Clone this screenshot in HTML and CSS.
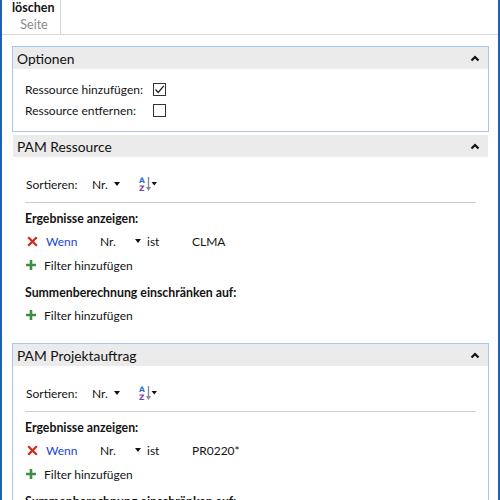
FILE: index.html
```html
<!DOCTYPE html>
<html lang="de">
<head>
<meta charset="utf-8">
<link rel="stylesheet" href="styles.css">
</head>
<body>
<div class="window">
  <div class="ribbon">
    <div class="tabgroup">
      <div class="tab-title">löschen</div>
      <div class="tab-sub">Seite</div>
    </div>
  </div>
  <div class="content">
    <section class="panel focused">
      <div class="panel-head"><span>Optionen</span><svg class="chev" width="10" height="7" viewBox="0 0 10 7"><polyline points="1.5,5.5 5,2 8.5,5.5" fill="none" stroke="#111" stroke-width="2.2"/></svg></div>
      <div class="panel-body options">
        <div class="opt-row"><span class="opt-label">Ressource hinzufügen:</span><span class="check"><svg width="11" height="11" viewBox="0 0 11 11"><polyline points="1.5,5.5 4.2,8.5 9.8,1.8" fill="none" stroke="#222" stroke-width="1.3"/></svg></span></div>
        <div class="opt-row"><span class="opt-label">Ressource entfernen:</span><span class="check"></span></div>
      </div>
    </section>

    <section class="panel">
      <div class="panel-head"><span>PAM Ressource</span><svg class="chev" width="10" height="7" viewBox="0 0 10 7"><polyline points="1.5,5.5 5,2 8.5,5.5" fill="none" stroke="#111" stroke-width="2.2"/></svg></div>
      <div class="panel-body">
        <div class="sort-row">
          <span class="sort-label">Sortieren:</span>
          <span class="sort-field">Nr.</span>
          <span class="tri"></span>
          <svg class="az" width="20" height="16" viewBox="0 0 20 16">
            <text x="1" y="7" class="az-a">A</text>
            <text x="1" y="15" class="az-z">Z</text>
            <line x1="10.5" y1="1" x2="10.5" y2="12" stroke="#8a8a8a" stroke-width="1.4"/>
            <polygon points="8,11 13,11 10.5,15" fill="#8a8a8a"/>
            <polygon points="13.5,6 19,6 16.25,9.5" fill="#111"/>
          </svg>
        </div>
        <div class="sep"></div>
        <div class="sub-title">Ergebnisse anzeigen:</div>
        <div class="cond-row">
          <svg class="xicon" width="11" height="11" viewBox="0 0 11 11"><path d="M1.2 1.2 L9.8 9.8 M9.8 1.2 L1.2 9.8" stroke="#d42a1a" stroke-width="2.3" fill="none"/></svg>
          <span class="wenn">Wenn</span>
          <span class="cond-field">Nr.</span>
          <span class="tri"></span>
          <span class="cond-op">ist</span>
          <span class="cond-val">CLMA</span>
        </div>
        <div class="add-row"><svg class="plus" width="10" height="10" viewBox="0 0 10 10"><path d="M5 0 V10 M0 5 H10" stroke="#3d8f46" stroke-width="2.6"/></svg><span>Filter hinzufügen</span></div>
        <div class="sub-title">Summenberechnung einschränken auf:</div>
        <div class="add-row"><svg class="plus" width="10" height="10" viewBox="0 0 10 10"><path d="M5 0 V10 M0 5 H10" stroke="#3d8f46" stroke-width="2.6"/></svg><span>Filter hinzufügen</span></div>
      </div>
    </section>

    <section class="panel focused">
      <div class="panel-head"><span>PAM Projektauftrag</span><svg class="chev" width="10" height="7" viewBox="0 0 10 7"><polyline points="1.5,5.5 5,2 8.5,5.5" fill="none" stroke="#111" stroke-width="2.2"/></svg></div>
      <div class="panel-body">
        <div class="sort-row">
          <span class="sort-label">Sortieren:</span>
          <span class="sort-field">Nr.</span>
          <span class="tri"></span>
          <svg class="az" width="20" height="16" viewBox="0 0 20 16">
            <text x="1" y="7" class="az-a">A</text>
            <text x="1" y="15" class="az-z">Z</text>
            <line x1="10.5" y1="1" x2="10.5" y2="12" stroke="#8a8a8a" stroke-width="1.4"/>
            <polygon points="8,11 13,11 10.5,15" fill="#8a8a8a"/>
            <polygon points="13.5,6 19,6 16.25,9.5" fill="#111"/>
          </svg>
        </div>
        <div class="sep"></div>
        <div class="sub-title">Ergebnisse anzeigen:</div>
        <div class="cond-row">
          <svg class="xicon" width="11" height="11" viewBox="0 0 11 11"><path d="M1.2 1.2 L9.8 9.8 M9.8 1.2 L1.2 9.8" stroke="#d42a1a" stroke-width="2.3" fill="none"/></svg>
          <span class="wenn">Wenn</span>
          <span class="cond-field">Nr.</span>
          <span class="tri"></span>
          <span class="cond-op">ist</span>
          <span class="cond-val">PR0220*</span>
        </div>
        <div class="add-row"><svg class="plus" width="10" height="10" viewBox="0 0 10 10"><path d="M5 0 V10 M0 5 H10" stroke="#3d8f46" stroke-width="2.6"/></svg><span>Filter hinzufügen</span></div>
        <div class="sub-title">Summenberechnung einschränken auf:</div>
        <div class="add-row"><svg class="plus" width="10" height="10" viewBox="0 0 10 10"><path d="M5 0 V10 M0 5 H10" stroke="#3d8f46" stroke-width="2.6"/></svg><span>Filter hinzufügen</span></div>
      </div>
    </section>
  </div>
</div>
</body>
</html>
```

FILE: styles.css
```css
html, body {
  margin: 0;
  padding: 0;
  background: #ffffff;
}
body {
  width: 500px;
  height: 500px;
  overflow: hidden;
  font-family: Lato, "Noto Sans", "Liberation Sans", sans-serif;
  font-size: 12px;
  color: #141414;
}
.window {
  box-sizing: border-box;
  width: 500px;
  height: 500px;
  border-left: 2px solid #1f5fb4;
  border-right: 2px solid #1f5fb4;
  overflow: hidden;
}
.ribbon {
  height: 34px;
  border-bottom: 1px solid #d6d6d6;
  display: flex;
}
.tabgroup {
  width: 58px;
  border-right: 1px solid #d6d6d6;
  display: flex;
  flex-direction: column;
}
.tab-title {
  font-weight: bold;
  font-size: 12.5px;
  padding-left: 10px;
  height: 17px;
  line-height: 15px;
  white-space: nowrap;
}
.tab-sub {
  color: #8c8c8c;
  font-size: 12.5px;
  text-align: center;
  padding-left: 6px;
  line-height: 16px;
}
.content {
  padding: 11px 9px 0 10px;
  display: flex;
  flex-direction: column;
  gap: 2px;
}
.panel {
  border: 1px solid transparent;
}
.panel.focused {
  border-color: #a6c7f2;
}
.panel-head {
  height: 22px;
  background: #ebebeb;
  display: flex;
  align-items: center;
  justify-content: space-between;
  padding: 0 8px 0 4px;
  font-size: 13.8px;
  color: #111;
}
.chev {
  display: block;
}
.panel-body {
  padding: 15px 12px 13px 12px;
  display: flex;
  flex-direction: column;
  white-space: nowrap;
}
.panel-body.options {
  padding: 10px 12px 10px 12px;
}
.opt-row {
  height: 21px;
  display: flex;
  align-items: center;
}
.opt-label {
  width: 128px;
  flex-shrink: 0;
}
.check {
  box-sizing: border-box;
  width: 13px;
  height: 13px;
  border: 1px solid #333;
  display: flex;
  align-items: center;
  justify-content: center;
}
.check svg {
  display: block;
}
.sort-row {
  height: 24px;
  display: flex;
  align-items: center;
}
.sort-label {
  width: 66px;
  padding-left: 1px;
}
.sort-field {
  width: 22px;
}
.tri {
  width: 0;
  height: 0;
  border-left: 3.5px solid transparent;
  border-right: 3.5px solid transparent;
  border-top: 4px solid #111;
}
.sort-row .tri {
  margin-right: 18px;
}
.az {
  display: block;
}
.az-a {
  font-family: "DejaVu Sans", sans-serif;
  font-size: 7.5px;
  font-weight: bold;
  fill: #2f6fd0;
}
.az-z {
  font-family: "DejaVu Sans", sans-serif;
  font-size: 7.5px;
  font-weight: bold;
  fill: #7a3fb0;
}
.sep {
  margin-top: 6px;
  height: 1px;
  background: #cfcfcf;
}
.sub-title {
  font-weight: bold;
  font-size: 12.3px;
  height: 20px;
  line-height: 20px;
  margin-top: 6px;
}
.cond-row {
  height: 24px;
  display: flex;
  align-items: center;
}
.xicon {
  display: block;
  margin-left: 2px;
  margin-right: 8px;
}
.wenn {
  color: #1c3fd8;
  width: 54px;
}
.cond-field {
  width: 35px;
}
.cond-row .tri {
  margin-right: 6px;
}
.cond-op {
  width: 45px;
}
.add-row {
  height: 24px;
  display: flex;
  align-items: center;
}
.plus {
  display: block;
  margin-left: 1px;
  margin-right: 8px;
}
```
